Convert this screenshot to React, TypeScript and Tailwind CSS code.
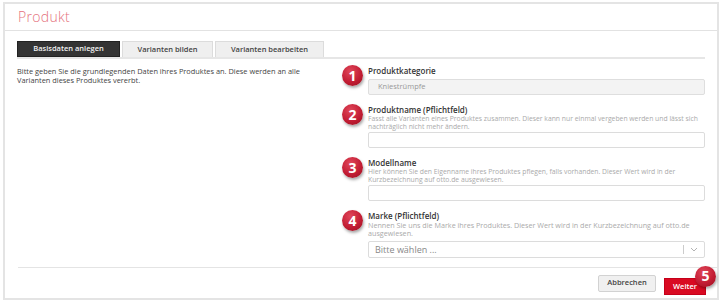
const FIELDS = [
  { n: 1, label: 'Produktkategorie', hint: '', kind: 'readonly', value: 'Kniestrümpfe' },
  {
    n: 2,
    label: 'Produktname (Pflichtfeld)',
    hint: 'Fasst alle Varianten eines Produktes zusammen. Dieser kann nur einmal vergeben werden und lässt sich nachträglich nicht mehr ändern.',
    kind: 'input',
    value: '',
  },
  {
    n: 3,
    label: 'Modellname',
    hint: 'Hier können Sie den Eigenname ihres Produktes pflegen, falls vorhanden. Dieser Wert wird in der Kurzbezeichnung auf otto.de ausgewiesen.',
    kind: 'input',
    value: '',
  },
  {
    n: 4,
    label: 'Marke (Pflichtfeld)',
    hint: 'Nennen Sie uns die Marke ihres Produktes. Dieser Wert wird in der Kurzbezeichnung auf otto.de ausgewiesen.',
    kind: 'select',
    value: 'Bitte wählen ...',
  },
]

function Badge({ n }: { n: number }) {
  return (
    <div className="w-[21px] h-[21px] rounded-full bg-[radial-gradient(circle_at_40%_30%,#e0475a_0%,#c31d34_55%,#96101f_100%)] shadow-[1px_2px_3px_rgba(0,0,0,0.35)] flex items-center justify-center text-white text-[14px] font-bold leading-none">
      {n}
    </div>
  )
}

export default function App() {
  return (
    <div className="w-[722px] h-[306px] bg-white pt-[2px] pl-[3px] font-['Open_Sans',sans-serif] text-[#333]">
      <div className="relative w-[716px] h-[298px] border-2 border-[#e4e4e4] bg-white flex flex-col">
        {/* Header */}
        <div className="h-[27px] border-b border-[#e2e2e2] px-[13px] flex items-center">
          <span className="text-[14px] font-light text-[#e5727d] leading-none tracking-[0.3px]">Produkt</span>
        </div>

        <div className="px-[12px] pt-[10px]">
          {/* Tabs */}
          <div className="flex gap-[2px] border-b-2 border-[#e6e6e6] w-[688px]">
            <div className="w-[103px] h-[16px] bg-[#343434] border border-[#222] flex items-center justify-center text-[7.5px] font-semibold text-[#f2f2f2]">
              Basisdaten anlegen
            </div>
            <div className="w-[91px] h-[16px] bg-[#efefef] border border-[#dcdcdc] border-b-0 flex items-center justify-center text-[7.5px] font-semibold text-[#444]">
              Varianten bilden
            </div>
            <div className="w-[109px] h-[16px] bg-[#efefef] border border-[#dcdcdc] border-b-0 flex items-center justify-center text-[7.5px] font-semibold text-[#444]">
              Varianten bearbeiten
            </div>
          </div>

          {/* Content */}
          <div className="flex pt-[6px]">
            <p className="w-[325px] pr-[10px] pt-[2px] text-[7.4px] leading-[9px] text-[#444]">
              Bitte geben Sie die grundlegenden Daten ihres Produktes an. Diese werden an alle Varianten dieses Produktes vererbt.
            </p>
            <div className="w-[363px] flex flex-col gap-[9px]">
              {FIELDS.map((f) => (
                <div key={f.n} className="flex gap-[5px]">
                  <Badge n={f.n} />
                  <div className="flex-1">
                    <div className="text-[8px] font-semibold leading-[11px] text-[#333]">{f.label}</div>
                    {f.hint ? (
                      <div
                        className={
                          f.n === 4
                            ? 'text-[7.2px] leading-[8px] text-[#aaa] pr-[2px]'
                            : 'text-[6.8px] leading-[8px] text-[#aaa] pr-[2px]'
                        }
                      >
                        {f.hint}
                      </div>
                    ) : null}
                    {f.kind === 'readonly' && (
                      <div className="mt-[3px] h-[16px] rounded-[2px] border border-[#dedede] bg-[#f3f3f3] px-[9px] flex items-center text-[7.5px] text-[#999]">
                        {f.value}
                      </div>
                    )}
                    {f.kind === 'input' && (
                      <div className="mt-[1px] h-[16px] rounded-[2px] border border-[#dcdcdc] bg-white" />
                    )}
                    {f.kind === 'select' && (
                      <div className="mt-[4px] h-[17px] rounded-[2px] border border-[#dcdcdc] bg-white pl-[6px] flex items-center">
                        <span className="flex-1 text-[9px] text-[#888]">{f.value}</span>
                        <div className="w-px h-[9px] bg-[#ccc]" />
                        <div className="w-[20px] flex items-center justify-center">
                          <svg width="8" height="5" viewBox="0 0 8 5" fill="none">
                            <path d="M1 1l3 3 3-3" stroke="#aaa" strokeWidth="0.9" />
                          </svg>
                        </div>
                      </div>
                    )}
                  </div>
                </div>
              ))}
            </div>
          </div>
        </div>

        {/* Footer */}
        <div className="mt-auto ml-[13px] border-t border-[#e4e4e4] h-[31px] flex items-center justify-end gap-[8px] pr-[11px]">
          <button className="w-[58px] h-[17px] bg-[#f0f0f0] border border-[#d2d2d2] rounded-[2px] text-[7.5px] font-semibold text-[#444]">
            Abbrechen
          </button>
          <div className="relative">
            <button className="w-[42px] h-[17px] bg-[#d90a22] border border-[#c5001a] text-[7.5px] font-semibold text-white">
              Weiter
            </button>
            <div className="absolute -top-[5px] left-[31px]">
              <Badge n={5} />
            </div>
          </div>
        </div>
      </div>
    </div>
  )
}
